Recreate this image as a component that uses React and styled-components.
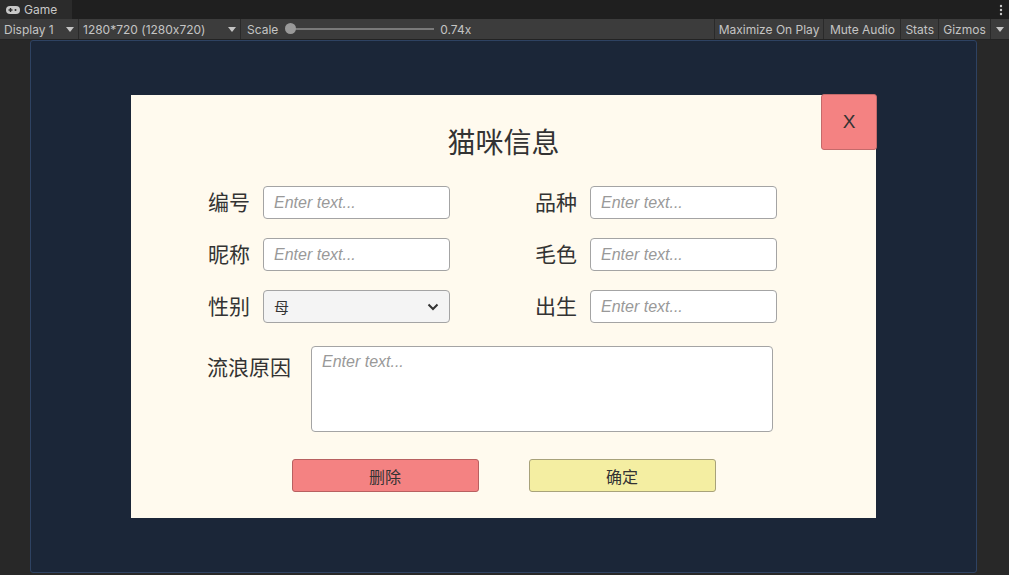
import React from 'react'
import styled, { createGlobalStyle } from 'styled-components'

const GlobalStyle = createGlobalStyle`
  html, body {
    margin: 0;
    padding: 0;
    background: #282828;
  }
  * {
    box-sizing: border-box;
  }
`

const Editor = styled.div`
  width: 1009px;
  height: 575px;
  display: flex;
  flex-direction: column;
  background: #282828;
  font-family: Inter, "Liberation Sans", sans-serif;
  font-feature-settings: "calt" 0;
  overflow: hidden;
`

const TabBar = styled.div`
  height: 19px;
  display: flex;
  align-items: stretch;
  justify-content: space-between;
  background: #1f1f1f;
`

const Tab = styled.div`
  width: 72px;
  display: flex;
  align-items: center;
  gap: 4px;
  padding-left: 6px;
  background: #2b2b2b;
  color: #c8c8c8;
  font-size: 12px;
`

const Dots = styled.div`
  width: 16px;
  display: flex;
  align-items: center;
  justify-content: center;
`

const Toolbar = styled.div`
  height: 21px;
  display: flex;
  align-items: stretch;
  background: #3c3c3c;
  color: #c4c4c4;
  font-size: 12px;
  border-bottom: 1px solid #232323;
`

const Drop = styled.div`
  width: ${p => p.w}px;
  display: flex;
  align-items: center;
  justify-content: space-between;
  padding: 0 4px 0 4px;
  border-right: 1px solid #2a2a2a;
  white-space: nowrap;
`

const Caret = styled.span`
  width: 0;
  height: 0;
  border-left: 4px solid transparent;
  border-right: 4px solid transparent;
  border-top: 5px solid #c4c4c4;
`

const ScaleBox = styled.div`
  display: flex;
  align-items: center;
  padding-left: 6px;
  flex: 1;
`

const Track = styled.div`
  position: relative;
  width: 143px;
  height: 2px;
  margin: 0 6px 0 13px;
  background: #7a7a7a;
`

const Knob = styled.div`
  position: absolute;
  left: -6px;
  top: -5px;
  width: 11px;
  height: 11px;
  border-radius: 50%;
  background: #999;
`

const ToolButton = styled.div`
  display: flex;
  align-items: center;
  justify-content: center;
  padding: 0 4px;
  min-width: ${p => p.w || 0}px;
  border-left: 1px solid #2a2a2a;
  white-space: nowrap;
`

const Viewport = styled.div`
  flex: 1;
  display: flex;
  padding: 0 32px 2px 30px;
`

const Screen = styled.div`
  flex: 1;
  display: flex;
  align-items: center;
  justify-content: center;
  background: #1b2638;
  border: 1px solid #2e4262;
  border-radius: 3px;
`

const Panel = styled.div`
  position: relative;
  width: 745px;
  height: 423px;
  background: #fffaee;
  padding: 26px 0 0 63px;
  display: flex;
  flex-direction: column;
  font-family: "Noto Sans CJK SC", "Liberation Sans", sans-serif;
  color: #333;
`

const CloseButton = styled.div`
  position: absolute;
  top: -1px;
  right: -1px;
  width: 56px;
  height: 56px;
  background: #f48282;
  border: 1px solid #c46a6a;
  border-radius: 3px;
  display: flex;
  align-items: center;
  justify-content: center;
  font-family: "Liberation Sans", sans-serif;
  font-size: 19px;
  color: #333;
`

const Title = styled.div`
  height: 40px;
  line-height: 40px;
  font-size: 28px;
  text-align: center;
  margin-left: -63px;
  color: #333;
`

const FieldGrid = styled.div`
  margin-top: 25px;
  display: grid;
  grid-template-columns: 256px 256px;
  column-gap: 71px;
  row-gap: 19px;
`

const Field = styled.div`
  display: flex;
  align-items: center;
  gap: 13px;
`

const Label = styled.div`
  width: 56px;
  text-align: right;
  font-size: 21px;
  line-height: 28px;
  padding-bottom: 4px;
  color: #333;
`

const InputBox = styled.div`
  width: 187px;
  height: 33px;
  background: ${p => (p.select ? '#f4f4f4' : '#ffffff')};
  border: 1px solid #a4a4a4;
  border-radius: 4px;
  display: flex;
  align-items: ${p => (p.multi ? 'flex-start' : 'center')};
  justify-content: space-between;
  padding: ${p => (p.multi ? '6px 10px' : '0 10px')};
`

const Placeholder = styled.span`
  font-family: "Liberation Sans", sans-serif;
  font-style: italic;
  font-size: 16px;
  color: #999;
`

const Value = styled.span`
  font-size: 15px;
  color: #333;
`

const ReasonRow = styled.div`
  margin-top: 23px;
  margin-left: 13px;
  display: flex;
  align-items: flex-start;
  gap: 20px;
`

const ReasonLabel = styled(Label)`
  width: auto;
  margin-top: 6px;
`

const TextArea = styled(InputBox)`
  width: 462px;
  height: 86px;
`

const ButtonRow = styled.div`
  margin: 27px 0 0 -63px;
  display: flex;
  justify-content: center;
  gap: 50px;
`

const Button = styled.div`
  width: 187px;
  height: 33px;
  background: ${p => p.bg};
  border: 1px solid ${p => p.edge};
  border-radius: 3px;
  display: flex;
  align-items: center;
  justify-content: center;
  font-size: 16px;
  color: #333;
`

const Chevron = () => (
  <svg width="12" height="8" viewBox="0 0 12 8">
    <path d="M1.5 1.5 L6 6 L10.5 1.5" fill="none" stroke="#333" strokeWidth="2" />
  </svg>
)

const Pad = () => (
  <svg width="14" height="8" viewBox="0 0 14 8">
    <rect x="0" y="0" width="14" height="8" rx="4" fill="#c8c8c8" />
    <rect x="2.5" y="3.3" width="4" height="1.4" fill="#2b2b2b" />
    <rect x="3.8" y="2" width="1.4" height="4" fill="#2b2b2b" />
    <circle cx="9.5" cy="4" r="1" fill="#2b2b2b" />
  </svg>
)

const MenuDots = () => (
  <svg width="4" height="12" viewBox="0 0 4 12">
    <circle cx="2" cy="2" r="1.2" fill="#c8c8c8" />
    <circle cx="2" cy="6" r="1.2" fill="#c8c8c8" />
    <circle cx="2" cy="10" r="1.2" fill="#c8c8c8" />
  </svg>
)

const TextField = ({ label }) => (
  <Field>
    <Label>{label}</Label>
    <InputBox>
      <Placeholder>Enter text...</Placeholder>
    </InputBox>
  </Field>
)

const fields = [
  ['编号', '品种'],
  ['昵称', '毛色'],
]

const App = () => (
  <>
    <GlobalStyle />
    <Editor>
      <TabBar>
        <Tab>
          <Pad />
          Game
        </Tab>
        <Dots>
          <MenuDots />
        </Dots>
      </TabBar>
      <Toolbar>
        <Drop w={79}>
          Display 1 <Caret />
        </Drop>
        <Drop w={162}>
          1280*720 (1280x720) <Caret />
        </Drop>
        <ScaleBox>
          Scale
          <Track>
            <Knob />
          </Track>
          0.74x
        </ScaleBox>
        <ToolButton w={107}>Maximize On Play</ToolButton>
        <ToolButton w={77}>Mute Audio</ToolButton>
        <ToolButton w={37}>Stats</ToolButton>
        <ToolButton w={52}>Gizmos</ToolButton>
        <ToolButton w={19}>
          <Caret />
        </ToolButton>
      </Toolbar>
      <Viewport>
        <Screen>
          <Panel>
            <CloseButton>X</CloseButton>
            <Title>猫咪信息</Title>
            <FieldGrid>
              {fields.flat().map(l => (
                <TextField key={l} label={l} />
              ))}
              <Field>
                <Label>性别</Label>
                <InputBox select>
                  <Value>母</Value>
                  <Chevron />
                </InputBox>
              </Field>
              <TextField label="出生" />
            </FieldGrid>
            <ReasonRow>
              <ReasonLabel>流浪原因</ReasonLabel>
              <TextArea multi>
                <Placeholder>Enter text...</Placeholder>
              </TextArea>
            </ReasonRow>
            <ButtonRow>
              <Button bg="#f48282" edge="#b86060">删除</Button>
              <Button bg="#f4eea2" edge="#a8a27a">确定</Button>
            </ButtonRow>
          </Panel>
        </Screen>
      </Viewport>
    </Editor>
  </>
)

export default App
